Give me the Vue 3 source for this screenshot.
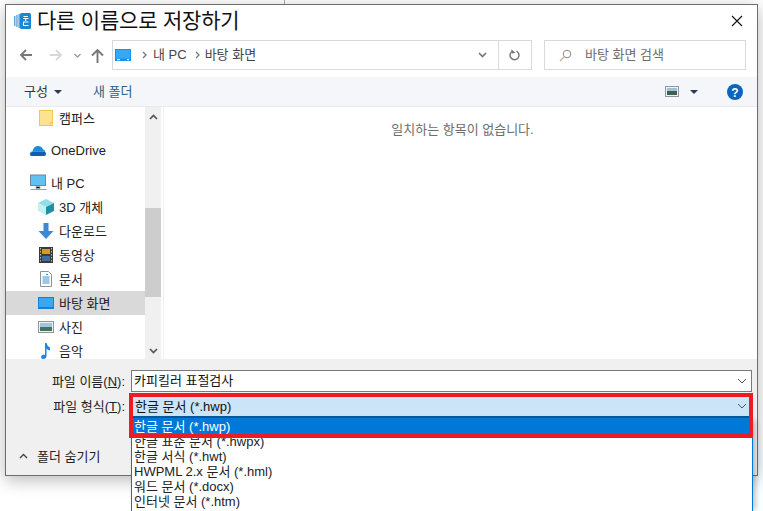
<script setup>
const navItems = [
  { label: '캠퍼스', icon: 'folder', cls: 'sub' },
  { label: 'OneDrive', icon: 'cloud', cls: 'root first-root' },
  { label: '내 PC', icon: 'pc', cls: 'root second-root' },
  { label: '3D 개체', icon: 'cube', cls: 'sub' },
  { label: '다운로드', icon: 'down', cls: 'sub' },
  { label: '동영상', icon: 'film', cls: 'sub' },
  { label: '문서', icon: 'doc', cls: 'sub' },
  { label: '바탕 화면', icon: 'desk', cls: 'sub selected' },
  { label: '사진', icon: 'photo', cls: 'sub' },
  { label: '음악', icon: 'music', cls: 'sub' }
]
const fileTypes = ['한글 표준 문서 (*.hwpx)', '한글 서식 (*.hwt)', 'HWPML 2.x 문서 (*.hml)', '워드 문서 (*.docx)', '인터넷 문서 (*.htm)']
</script>

<template>
  <div class="page">
    <i class="bg-line"></i>
    <section class="dialog">
      <header class="titlebar">
        <svg class="app-icon" width="17" height="16" viewBox="0 0 17 16">
          <path d="M0 3h1.500v10H0zM2.200 2h1.500v12H2.200zM4.400 1H6v14H4.400z" fill="#63a9dc"/>
          <path d="M6 1.500Q6 0 7.500 0h8Q17 0 17 1.500v13q0 1.500-1.500 1.500h-8Q6 16 6 14.500z" fill="#1c86d0"/>
          <path d="M9.500 3.500h4.500M9 5.500h5.500M11.700 6v2M9 9h5.500M9.500 9.500v3h5" stroke="#fff" stroke-width="1.100" fill="none"/>
        </svg>
        <h1 class="title">다른 이름으로 저장하기</h1>
        <svg class="close" width="12" height="12" viewBox="0 0 12 12"><path d="M1 1l10 10M11 1L1 11" stroke="#111" stroke-width="1.100"/></svg>
      </header>

      <div class="addressbar">
        <div class="navbtns">
          <svg width="14" height="14" viewBox="0 0 14 14"><path d="M13 7H2M7 2L2 7l5 5" stroke="#777" stroke-width="1.800" fill="none"/></svg>
          <svg width="14" height="14" viewBox="0 0 14 14"><path d="M1 7h11M7 2l5 5-5 5" stroke="#d9d9d9" stroke-width="1.800" fill="none"/></svg>
          <svg class="mini" width="7" height="5" viewBox="0 0 7 5"><path d="M.5 1l3 3 3-3" stroke="#999" stroke-width="1.300" fill="none"/></svg>
          <svg width="13" height="15" viewBox="0 0 13 15"><path d="M6.500 15V2M1 7.500l5.500-5.500L12 7.500" stroke="#777" stroke-width="1.900" fill="none"/></svg>
        </div>
        <div class="pathbox">
          <svg class="pc-mini" width="16" height="12" viewBox="0 0 16 12"><rect width="16" height="12" fill="#1c8fe6"/><rect x="1" y="1" width="14" height="8.500" fill="#36a9f5"/><path d="M2 10.700h3M12 10.700h2" stroke="#fff"/></svg>
          <svg class="chev" width="5" height="8" viewBox="0 0 5 8"><path d="M1 1l3 3-3 3" stroke="#777" stroke-width="1.300" fill="none"/></svg>
          <span class="crumb">내 PC</span>
          <svg class="chev" width="5" height="8" viewBox="0 0 5 8"><path d="M1 1l3 3-3 3" stroke="#777" stroke-width="1.300" fill="none"/></svg>
          <span class="crumb">바탕 화면</span>
          <svg class="path-caret" width="9" height="6" viewBox="0 0 9 6"><path d="M1 1l3.500 3.500L8 1" stroke="#777" stroke-width="1.700" fill="none"/></svg>
          <div class="refresh">
            <svg width="12" height="12" viewBox="0 0 12 12"><path d="M7.500 2.200A4.500 4.500 0 1 1 3 2.500" stroke="#777" stroke-width="1.500" fill="none"/><path d="M2.500 0v4.200h3.800z" fill="#777" transform="rotate(-8 4 2)"/></svg>
          </div>
        </div>
        <div class="searchbox">
          <svg width="13" height="13" viewBox="0 0 13 13"><circle cx="8" cy="5" r="3.800" stroke="#8a8a8a" fill="none"/><path d="M5 8L1 12" stroke="#c9a88f" stroke-width="1.100"/></svg>
          <span class="lift">바탕 화면 검색</span>
        </div>
      </div>

      <div class="toolbar">
        <span class="tool">구성</span><i class="caret"></i>
        <span class="tool newfolder">새 폴더</span>
        <svg class="view" width="14" height="11" viewBox="0 0 14 11"><rect x=".5" y=".5" width="13" height="10" fill="#eef3f7" stroke="#8f979d"/><rect x="2" y="2" width="10" height="3" fill="#9fc3de"/><rect x="2" y="5" width="10" height="4" fill="#42604f"/></svg>
        <i class="caret view-caret"></i>
        <svg class="help" width="16" height="16" viewBox="0 0 16 16"><circle cx="8" cy="8" r="8" fill="#0b64bd"/><text x="8" y="12.500" text-anchor="middle" class="help-q">?</text></svg>
      </div>

      <div class="body">
        <nav class="nav">
          <div v-for="item in navItems" :key="item.label" class="nav-row" :class="item.cls">
            <svg class="nav-icon" width="20" height="18" viewBox="0 0 20 18">
              <g v-if="item.icon === 'folder'"><rect x="3.500" y="1.500" width="13" height="15" fill="#fde28f" stroke="#eec84f"/><path d="M14 16.500v-3h2.500" stroke="#eec84f" fill="none"/></g>
              <g v-else-if="item.icon === 'cloud'"><path d="M1 13q-1-3 2.500-4Q5 4 9 4q4 0 5 3.500 2 0 2 2H3Q1 10.500 1 13z" fill="#1d8ad8"/><path d="M1 13q0-3 3-3.500h12q1 1 1 2.500 0 2-2 2H3q-1.500 0-2-1z" fill="#0a5fae"/></g>
              <g v-else-if="item.icon === 'pc'"><rect x="1.500" y="1" width="15" height="10.500" fill="#60c1f2" stroke="#6c8899"/><path d="M7 12.500h4v2H7zM1.500 15.500h16" stroke="#8fa7b5"/></g>
              <g v-else-if="item.icon === 'cube'"><path d="M2 5l8-4 8 4-8 4z" fill="#8de0ea"/><path d="M2 5v8l8 4V9z" fill="#c4f0f2"/><path d="M18 5v8l-8 4V9z" fill="#208ea3"/></g>
              <path v-else-if="item.icon === 'down'" d="M7.500 1h5v8h5L10 17 2.500 9h5z" fill="#3c88d8"/>
              <g v-else-if="item.icon === 'film'"><rect x="3" y="1" width="14" height="16" fill="#3a3a3a"/><rect x="6" y="3" width="8" height="5" fill="#d99a1e"/><rect x="6" y="10" width="8" height="5" fill="#3d6f9c"/><path d="M4.500 2v14M15.500 2v14" stroke="#bbb" stroke-dasharray="1.500 1.500"/></g>
              <g v-else-if="item.icon === 'doc'"><path d="M4.500 1.500h8l3 3v12h-11z" fill="#fff" stroke="#8b949b"/><path d="M6.500 7h7M6.500 9h7M6.500 11h7M6.500 13h7M10 4.500h2" stroke="#3f8fc4"/></g>
              <g v-else-if="item.icon === 'desk'"><rect x="2" y="3" width="16" height="12" fill="#0f82dc"/><rect x="3" y="4" width="14" height="9" fill="#39a7f2"/></g>
              <g v-else-if="item.icon === 'photo'"><rect x="2.500" y="3.500" width="15" height="11" fill="#eef2f5" stroke="#8f979d"/><rect x="4" y="5" width="12" height="4" fill="#a2c6dd"/><rect x="4" y="9" width="12" height="4" fill="#48705e"/></g>
              <path v-else d="M9 1h1.500q.5 3 3.500 4.500v3q-2.500-.5-3.500-2V14q0 3-3.500 3Q5 17 5 15t2.500-2.500q1 0 1.500.5z" fill="#1c86e0"/>
            </svg>
            <span class="lift">{{ item.label }}</span>
          </div>
        </nav>
        <div class="scrollbar">
          <svg width="9" height="6" viewBox="0 0 9 6"><path d="M1 5l3.500-3.500L8 5" stroke="#555" stroke-width="1.700" fill="none"/></svg>
          <div class="thumb"></div>
          <svg class="scroll-down" width="9" height="6" viewBox="0 0 9 6"><path d="M1 1l3.500 3.500L8 1" stroke="#555" stroke-width="1.700" fill="none"/></svg>
        </div>
        <main class="content">일치하는 항목이 없습니다.</main>
      </div>

      <footer class="footer">
        <div class="form-row name-row">
          <label class="lift">파일 이름(<u>N</u>):</label>
          <div class="field"><span class="lift name-text">카피킬러 표절검사</span><svg width="10" height="6" viewBox="0 0 10 6"><path d="M1 1l4 4 4-4" stroke="#555" fill="none"/></svg></div>
        </div>
        <div class="form-row type-row">
          <label>파일 형식(<u>T</u>):</label>
          <div class="field type-field"><span>한글 문서 (*.hwp)</span><svg width="10" height="6" viewBox="0 0 10 6"><path d="M1 1l4 4 4-4" stroke="#555" fill="none"/></svg></div>
        </div>
        <div class="hide-folders">
          <svg width="9" height="6" viewBox="0 0 9 6"><path d="M1 5l3.500-3.500L8 5" stroke="#444" stroke-width="1.400" fill="none"/></svg>
          <span>폴더 숨기기</span>
        </div>
      </footer>

      <div class="dropdown">
        <div class="opt-selected">한글 문서 (*.hwp)</div>
        <div class="opt-list">
          <div v-for="t in fileTypes" :key="t" class="opt">{{ t }}</div>
        </div>
      </div>
      <div class="redbox"></div>
    </section>
  </div>
</template>

<style>
html, body { margin: 0; background: #fff; overflow: hidden; }
</style>

<style scoped>
.page {
  position: relative;
  width: 763px;
  height: 511px;
  overflow: hidden;
  background: #fff;
  padding: 4px 5px 0;
  box-sizing: border-box;
  font: 13px "Liberation Sans", "Noto Sans CJK KR", sans-serif;
  color: #222;
}
.bg-line { position: absolute; left: 284px; top: 0; width: 1px; height: 4px; background: #aaa; }
.lift { padding-bottom: 2px; }
.dialog {
  position: relative;
  width: 753px;
  height: 472px;
  box-sizing: border-box;
  border: 1px solid #6d6d6d;
  background: #fff;
  display: flex;
  flex-direction: column;
  box-shadow: 0 4px 16px rgba(0, 0, 0, .28);
}
.titlebar { height: 31px; display: flex; align-items: center; padding: 0 14px 0 8px; flex: none; }
.app-icon { margin-right: 6px; }
.title { margin: 0; font-size: 21px; font-weight: 400; color: #111; line-height: 28px; flex: 1; letter-spacing: -.2px; }
.addressbar { height: 41px; display: flex; align-items: flex-start; padding-top: 4px; box-sizing: border-box; flex: none; }
.navbtns { width: 106px; height: 30px; display: flex; align-items: center; padding-left: 13px; box-sizing: border-box; }
.navbtns svg:nth-child(2) { margin-left: 16px; }
.navbtns .mini { margin-left: 11px; margin-right: 10px; }
.pathbox {
  width: 420px; height: 30px; box-sizing: border-box; border: 1px solid #d9d9d9;
  display: flex; align-items: center; padding-left: 2px; color: #444;
}
.pc-mini { margin-right: 11px; }
.chev { margin-right: 6px; }
.crumb { margin-right: 8px; padding-bottom: 3px; }
.crumb + .chev { margin-right: 5px; }
.path-caret { margin-left: auto; margin-right: 11px; }
.refresh { width: 32px; height: 28px; border-left: 1px solid #d9d9d9; display: flex; align-items: center; justify-content: center; }
.searchbox {
  width: 202px; height: 30px; margin-left: 12px; box-sizing: border-box; border: 1px solid #d9d9d9;
  display: flex; align-items: center; padding-left: 14px; gap: 13px; color: #6d6d6d;
}
.searchbox .lift { padding-bottom: 3px; }
.toolbar {
  height: 30px; background: #f4f6f9; border-bottom: 1px solid #e8eaed; box-sizing: border-box;
  display: flex; align-items: center; padding-left: 18px; flex: none; color: #333;
}
.tool { line-height: 16px; }
.caret { width: 0; height: 0; border: 4px solid transparent; border-top: 4px solid #2c3a57; border-bottom: 0; margin-left: 6px; }
.newfolder { margin-left: 31px; color: #2f5f87; }
.view { margin-left: auto; margin-right: -1px; }
.view-caret { margin-left: 12px; }
.help { margin-left: 29px; margin-right: 14px; }
.help-q { fill: #fff; font: 700 12px "Liberation Sans", sans-serif; }
.body { height: 252px; display: flex; overflow: hidden; flex: none; }
.nav { width: 139px; flex: none; overflow: hidden; }
.nav-row { height: 24px; display: flex; align-items: center; color: #222; }
.nav-row.sub { padding-left: 30px; }
.nav-row.root { padding-left: 23px; }
.nav-row:first-child { margin-top: -1px; }
.first-root { margin-top: 9px; }
.second-root { margin-top: 8px; }
.nav-row.selected { background: #d9d9d9; }
.nav-icon { margin-right: 3px; flex: none; }
.nav-row.root .nav-icon { margin-right: 2px; }
.scrollbar {
  width: 16px; background: #f0f0f0; flex: none;
  display: flex; flex-direction: column; align-items: center; padding-top: 7px; box-sizing: border-box;
}
.thumb { width: 16px; height: 89px; background: #cdcdcd; margin-top: 88px; }
.scroll-down { margin-top: auto; margin-bottom: 5px; }
.content {
  flex: 1; margin-left: 2px; border-left: 1px solid #f0f0f0; color: #6d6d6d;
  text-align: center; padding: 14px 0 0 4px; line-height: 18px;
}
.footer { flex: 1; background: #f0f0f0; padding-top: 11px; box-sizing: border-box; }
.form-row { display: flex; align-items: center; height: 22px; margin-bottom: 2px; }
.type-row { height: 23px; }
.form-row label { width: 125px; text-align: right; padding-right: 6px; box-sizing: border-box; color: #222; }
.field {
  width: 621px; height: 100%; box-sizing: border-box; border: 1px solid #7a7a7a; background: #fff; color: #111;
  display: flex; align-items: center; justify-content: space-between; padding: 0 4px 0 3px;
}
.name-text { margin-left: -1px; padding-bottom: 3px; }
.type-field { background: #cce4f7; border-color: #005a9e; }
.hide-folders { display: flex; align-items: center; gap: 9px; margin: 29px 0 0 13px; color: #222; }
.dropdown { position: absolute; left: 125px; top: 412px; width: 622px; height: 90px; z-index: 2; box-shadow: 3px 3px 5px rgba(0,0,0,.22); }
.opt-selected { height: 17px; box-sizing: border-box; background: #0078d7; color: #fff; line-height: 18px; padding-left: 3px; border-top: 1px solid #005a9e; }
.opt-list { background: #fff; border: 1px solid #0078d7; border-top: 0; height: 80px; padding-left: 2px; }
.opt { height: 15px; line-height: 15px; color: #222; }
.redbox { position: absolute; left: 123px; top: 388px; width: 624px; height: 45px; border: 4px solid #ed1c24; z-index: 3; box-sizing: border-box; }
</style>
